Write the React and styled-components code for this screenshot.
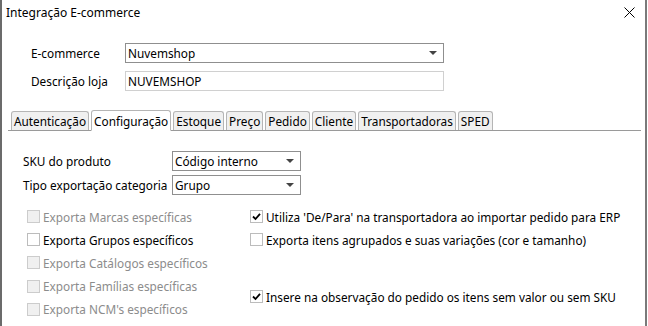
import React from "react";
import styled, { createGlobalStyle, css } from "styled-components";

const GlobalStyle = createGlobalStyle`
  html, body {
    margin: 0;
    padding: 0;
    background: #fff;
  }
  body {
    font-family: "Noto Sans", "Open Sans", sans-serif;
    font-size: 11.8px;
    color: #000;
  }
`;

const Window = styled.div`
  width: 647px;
  height: 326px;
  box-sizing: border-box;
  border-left: 2px solid #6b6b6b;
  border-right: 2px solid #7a7a7a;
  background: #fff;
  overflow: hidden;
`;

const TitleBar = styled.div`
  height: 24px;
  display: flex;
  align-items: center;
  justify-content: space-between;
  padding: 0 9px 0 4px;
`;

const Title = styled.span`
  font-size: 12px;
`;

const CloseButton = styled.button`
  border: none;
  background: none;
  padding: 0;
  width: 14px;
  height: 14px;
  display: flex;
  align-items: center;
  justify-content: center;
  cursor: pointer;
`;

const Header = styled.div`
  display: grid;
  grid-template-columns: 94px 319px;
  row-gap: 8px;
  align-items: center;
  padding: 19px 0 0 29px;
`;

const Label = styled.span`
  white-space: nowrap;
`;

const Field = styled.div`
  height: 20px;
  box-sizing: border-box;
  border: 1px solid ${(p) => (p.light ? "#d0d0d0" : "#8f8f8f")};
  display: flex;
  align-items: center;
  justify-content: space-between;
  padding: 0 6px 0 2px;
  background: #fff;
`;

const Caret = styled.span`
  width: 0;
  height: 0;
  border-left: 4px solid transparent;
  border-right: 4px solid transparent;
  border-top: 4px solid #444;
`;

const Tabs = styled.div`
  margin: 17px 0 0 6px;
  width: 633px;
  display: flex;
  align-items: flex-end;
  gap: 2px;
  border-bottom: 1px solid #9a9a9a;
  height: 23px;
  padding-left: 3px;
  box-sizing: border-box;
`;

const Tab = styled.div`
  height: 19px;
  box-sizing: border-box;
  padding: 0 2px;
  border: 1px solid #b5b5b5;
  border-bottom: none;
  border-radius: 3px 3px 0 0;
  background: #f0f0f0;
  display: flex;
  align-items: center;
  white-space: nowrap;
  ${(p) =>
    p.active &&
    css`
      height: 21px;
      background: #fff;
      margin-bottom: -1px;
      border-bottom: 1px solid #fff;
    `}
`;

const Body = styled.div`
  padding: 20px 0 0 21px;
`;

const SettingsGrid = styled.div`
  display: grid;
  grid-template-columns: 149px 129px;
  row-gap: 4px;
  align-items: center;
`;

const Options = styled.div`
  display: flex;
  margin-top: 10px;
  padding-left: 4px;
`;

const Column = styled.div`
  display: flex;
  flex-direction: column;
  width: ${(p) => p.w}px;
`;

const CheckRow = styled.label`
  display: flex;
  align-items: center;
  gap: 2px;
  height: 23.2px;
  color: ${(p) => (p.disabled ? "#8c8c8c" : "#000")};
  white-space: nowrap;
  margin-top: ${(p) => p.offset || 0}px;
`;

const Box = styled.span`
  width: 13px;
  height: 13px;
  box-sizing: border-box;
  border: 1px solid ${(p) => (p.disabled ? "#cccccc" : "#bcbcbc")};
  background: ${(p) => (p.disabled ? "#f0f0f0" : "#fff")};
  display: flex;
  align-items: center;
  justify-content: center;
  flex-shrink: 0;
  margin-right: 1px;
`;

function Check({ label, checked, disabled, offset }) {
  return (
    <CheckRow disabled={disabled} offset={offset}>
      <Box disabled={disabled}>
        {checked && (
          <svg width="9" height="9" viewBox="0 0 9 9">
            <path d="M1 4.5 L3.5 7 L8 1.8" fill="none" stroke="#000" strokeWidth="1.8" />
          </svg>
        )}
      </Box>
      {label}
    </CheckRow>
  );
}

const tabs = [
  "Autenticação",
  "Configuração",
  "Estoque",
  "Preço",
  "Pedido",
  "Cliente",
  "Transportadoras",
  "SPED",
];

export default function App() {
  return (
    <>
      <GlobalStyle />
      <Window>
        <TitleBar>
          <Title>Integração E-commerce</Title>
          <CloseButton>
            <svg width="11" height="11" viewBox="0 0 11 11">
              <path d="M0.5 0.5 L10.5 10.5 M10.5 0.5 L0.5 10.5" stroke="#000" strokeWidth="1" />
            </svg>
          </CloseButton>
        </TitleBar>

        <Header>
          <Label>E-commerce</Label>
          <Field>
            Nuvemshop
            <Caret />
          </Field>
          <Label>Descrição loja</Label>
          <Field light>NUVEMSHOP</Field>
        </Header>

        <Tabs>
          {tabs.map((t) => (
            <Tab key={t} active={t === "Configuração"}>
              {t}
            </Tab>
          ))}
        </Tabs>

        <Body>
          <SettingsGrid>
            <Label>SKU do produto</Label>
            <Field>
              Código interno
              <Caret />
            </Field>
            <Label>Tipo exportação categoria</Label>
            <Field>
              Grupo
              <Caret />
            </Field>
          </SettingsGrid>

          <Options>
            <Column w={223}>
              <Check label="Exporta Marcas específicas" disabled />
              <Check label="Exporta Grupos específicos" />
              <Check label="Exporta Catálogos específicos" disabled />
              <Check label="Exporta Famílias específicas" disabled />
              <Check label="Exporta NCM's específicos" disabled />
            </Column>
            <Column w={380}>
              <Check label="Utiliza 'De/Para' na transportadora ao importar pedido para ERP" checked />
              <Check label="Exporta itens agrupados e suas variações (cor e tamanho)" />
              <Check label="Insere na observação do pedido os itens sem valor ou sem SKU" checked offset={34} />
            </Column>
          </Options>
        </Body>
      </Window>
    </>
  );
}
